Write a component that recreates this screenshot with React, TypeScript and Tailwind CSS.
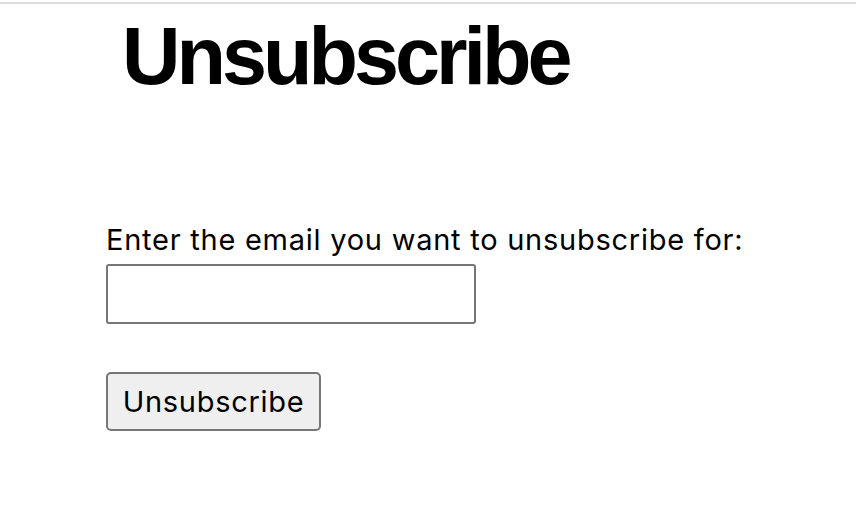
import React, { useState } from 'react';

const App: React.FC = () => {
    const [email, setEmail] = useState('');

    return (
        <div className="min-h-screen bg-white text-black">
            {/* top rule */}
            <div className="pt-[2px]">
                <div className="h-[2px] bg-[#dcdcdc]" />
            </div>

            <div className="pl-[106px]">
                <h1
                    className="ml-[16px] mt-[12px] text-[81px] leading-[81px] font-bold tracking-[-4px]"
                    style={{ fontFamily: '"Liberation Sans", Arial, sans-serif' }}
                >
                    Unsubscribe
                </h1>

                <form
                    className="mt-[125px] flex flex-col items-start"
                    style={{ fontFamily: 'Inter, "Liberation Sans", sans-serif' }}
                    onSubmit={e => e.preventDefault()}
                >
                    <label htmlFor="email" className="text-[29px] leading-[35px] tracking-[0.75px]">
                        Enter the email you want to unsubscribe for:
                    </label>
                    <input
                        id="email"
                        type="email"
                        value={email}
                        onChange={e => setEmail(e.target.value)}
                        className="mt-[7px] w-[370px] h-[60px] border-2 border-[#767676] rounded-[3px] bg-white px-2 text-[28px] focus:outline-none"
                    />
                    <button
                        type="submit"
                        className="mt-[48px] w-[215px] h-[59px] border-2 border-[#767676] rounded-[5px] bg-[#efefef] text-[29px] leading-[35px] tracking-[0.7px]"
                    >
                        Unsubscribe
                    </button>
                </form>
            </div>
        </div>
    );
};

export default App;
